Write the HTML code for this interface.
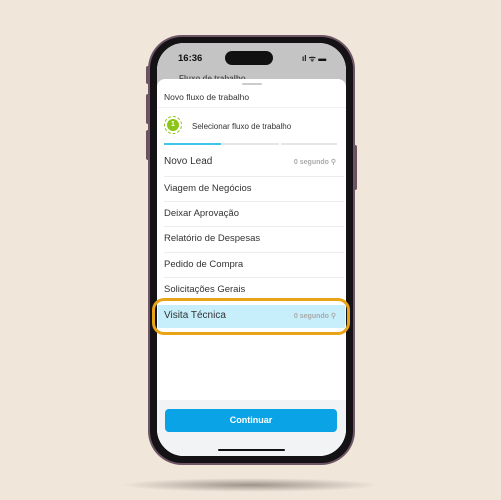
<!DOCTYPE html>
<html><head><style>
body{margin:0;width:501px;height:500px;background:#f0e6da;position:relative;overflow:hidden;font-family:"Liberation Sans",sans-serif;}
.abs{position:absolute}
.row{position:absolute;left:164px;width:180px;font-size:9px;color:#333;}
.line{position:absolute;left:164px;width:180px;height:1px;background:#ececec}
.sec{position:absolute;right:24px;font-size:7px;color:#aaa;font-weight:bold}
</style></head><body>
<div class="abs" style="left:120px;top:478px;width:260px;height:14px;border-radius:50%;background:radial-gradient(ellipse at center,rgba(90,80,70,.55),rgba(90,80,70,0) 70%)"></div>
<div class="abs" style="left:146px;top:66px;width:4px;height:18px;background:#6b5060;border-radius:2px"></div>
<div class="abs" style="left:146px;top:94px;width:4px;height:30px;background:#6b5060;border-radius:2px"></div>
<div class="abs" style="left:146px;top:130px;width:4px;height:30px;background:#6b5060;border-radius:2px"></div>
<div class="abs" style="left:353px;top:145px;width:4px;height:45px;background:#6b5060;border-radius:2px"></div>
<div class="abs" style="left:148px;top:35px;width:207px;height:430px;border-radius:34px;background:#6e5565"></div>
<div class="abs" style="left:150px;top:37px;width:203px;height:426px;border-radius:32px;background:#141214"></div>
<div class="abs" style="left:157px;top:43px;width:189px;height:413px;border-radius:27px;background:#fff;overflow:hidden">
 <div class="abs" style="left:0;top:0;width:189px;height:45px;background:#c4c4c4"></div>
 <div class="abs" style="left:21px;top:10px;font-size:9.5px;font-weight:bold;color:#111">16:36</div>
 <div class="abs" style="left:68px;top:8px;width:48px;height:14px;border-radius:7px;background:#111"></div>
 <div class="abs" style="left:145px;top:10px;font-size:8px;color:#111;font-weight:bold">ıl ᯤ ▬</div>
 <div class="abs" style="left:22px;top:31px;font-size:8px;font-weight:bold;color:#555">Fluxo de trabalho</div>
 <div class="abs" style="left:0;top:36px;width:189px;height:380px;border-radius:8px 8px 0 0;background:#fff"></div>
 <div class="abs" style="left:85px;top:40px;width:20px;height:2px;background:#ccc;border-radius:1px"></div>
 <div class="abs" style="left:0;top:357px;width:189px;height:60px;background:#f2f3f5"></div>
 <div class="abs" style="left:8px;top:366px;width:172px;height:23px;border-radius:4px;background:#0aa3e6;color:#fff;font-size:9px;font-weight:bold;text-align:center;line-height:23px">Continuar</div>
 <div class="abs" style="left:61px;top:406px;width:67px;height:2px;background:#111;border-radius:1px"></div>
</div>
<div class="abs" style="left:164px;top:92px;font-size:8.5px;color:#333">Novo fluxo de trabalho</div>
<div class="abs" style="left:158px;top:107px;width:188px;height:1px;background:#f0f0f0"></div>
<div class="abs" style="left:164px;top:116px;width:18px;height:18px;border-radius:50%;border:1px dashed #8cc417;box-sizing:border-box"></div>
<div class="abs" style="left:167px;top:119px;width:12px;height:12px;border-radius:50%;background:#8cc417;color:#fff;font-size:7px;font-weight:bold;text-align:center;line-height:12px">1</div>
<div class="abs" style="left:192px;top:122px;font-size:8px;color:#333">Selecionar fluxo de trabalho</div>
<div class="abs" style="left:164px;top:143px;width:115px;height:2px;background:#e6e6e6"></div>
<div class="abs" style="left:281px;top:143px;width:56px;height:2px;background:#e6e6e6"></div>
<div class="abs" style="left:164px;top:143px;width:57px;height:2px;background:#3ec6e8"></div>
<div class="row" style="top:156px;font-size:10px">Novo Lead<span class="sec" style="right:8px;top:2px">0 segundo ⚲</span></div>
<div class="line" style="top:176px"></div>
<div class="row" style="top:183px;font-size:9.5px">Viagem de Negócios</div>
<div class="line" style="top:201px"></div>
<div class="row" style="top:208px;font-size:9.5px">Deixar Aprovação</div>
<div class="line" style="top:226px"></div>
<div class="row" style="top:233px;font-size:9.5px">Relatório de Despesas</div>
<div class="line" style="top:252px"></div>
<div class="row" style="top:259px;font-size:9.5px">Pedido de Compra</div>
<div class="line" style="top:277px"></div>
<div class="row" style="top:284px;font-size:9.5px">Solicitações Gerais</div>
<div class="abs" style="left:158px;top:305px;width:187px;height:23px;background:#c6eefb"></div>
<div class="row" style="top:310px;font-size:10px">Visita Técnica<span class="sec" style="right:8px;top:2px">0 segundo ⚲</span></div>
<div class="abs" style="left:152px;top:298px;width:198px;height:37px;border:3px solid #e8a317;border-radius:12px;box-sizing:border-box"></div>
</body></html>
